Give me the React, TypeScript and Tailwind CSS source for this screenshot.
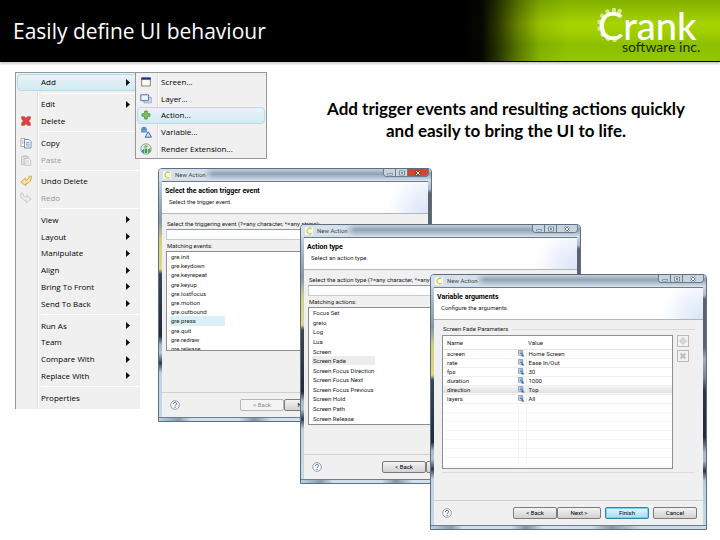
import React from 'react';
import { clsx } from 'clsx';

const BackArrow = ({ muted = false }: { muted?: boolean }) => (
  <svg viewBox="0 0 12 12" className={clsx('size-3', muted && '-scale-x-100')} aria-hidden="true">
    <path
      d="M.8 7 5.2 3.2 5.4 5.2C7.6 5.2 8.9 3.8 9.3 1.2L11.3 1.2C11.6 5.2 9.6 8.4 5.8 8.8L6 10.8Z"
      fill={muted ? '#ececec' : '#fbe3a0'}
      stroke={muted ? '#c4c4c4' : '#c9952f'}
      strokeWidth=".8"
      strokeLinejoin="round"
    />
  </svg>
);

const DeleteIcon = () => (
  <svg viewBox="0 0 12 12" className="size-3" aria-hidden="true">
    <path d="M1.5 1.8H4.6L6 3.4 7.4 1.8H10.5L10 4.4 8.6 6 10 7.6 10.5 10.2H7.4L6 8.6 4.6 10.2H1.5L2 7.6 3.4 6 2 4.4Z" fill="#e0403f" stroke="#c2383a" strokeWidth=".7" />
  </svg>
);

const CopyIcon = () => (
  <svg viewBox="0 0 12 12" className="size-3" aria-hidden="true">
    <path d="M1 1.5H5V9.5H1Z" fill="#fff" stroke="#a29a6c" strokeWidth=".8" />
    <path d="M4.5 2.5H9L11 4.5V11H4.5Z" fill="#f4f8ff" stroke="#7387b4" strokeWidth=".9" />
    <path d="M6 5.5H9.5M6 7.2H9.5M6 9H9.5M2 4H3.5M2 6H3.5" stroke="#6d86bd" strokeWidth=".8" />
  </svg>
);

const PasteIcon = () => (
  <svg viewBox="0 0 12 12" className="size-3" aria-hidden="true">
    <path d="M1.5 2.5H8.5V10.5H1.5Z" fill="#dedede" stroke="#bdbdbd" strokeWidth=".8" />
    <path d="M3.3 1.2H6.7V3.2H3.3Z" fill="#c8c8c8" />
    <path d="M5 4.5H9L10.7 6.2V11.3H5Z" fill="#f4f4f4" stroke="#bcbcbc" strokeWidth=".8" />
    <path d="M6.3 7H9M6.3 9H9" stroke="#c4c4c4" strokeWidth=".8" />
  </svg>
);

const ScreenIcon = () => (
  <svg viewBox="0 0 12 12" className="size-3" aria-hidden="true">
    <path d="M1.7 2H10.3V10H1.7Z" fill="#fdfcf4" stroke="#7e7558" strokeWidth=".9" />
    <path d="M1.3 1.5H10.7V3.7H1.3Z" fill="#1d2c96" />
  </svg>
);

const LayerIcon = () => (
  <svg viewBox="0 0 12 12" className="size-3" aria-hidden="true">
    <path d="M4 4.5H11.3V9.8H4Z" fill="#d9e4f7" stroke="#8d9cc0" strokeWidth=".8" />
    <path d="M.8 1.8H8.6V7.7H.8Z" fill="#eef4ff" stroke="#4e6cb5" strokeWidth="1" />
  </svg>
);

const PlusIcon = () => (
  <svg viewBox="0 0 12 12" className="size-3" aria-hidden="true">
    <path d="M4.7 2H7.3V4.7H10V7.3H7.3V10H4.7V7.3H2V4.7H4.7Z" fill="#83c25a" stroke="#4b9140" strokeWidth=".8" />
  </svg>
);

const VariableIcon = () => (
  <svg viewBox="0 0 12 12" className="size-3" aria-hidden="true">
    <circle cx="4" cy="3.6" r="2.8" fill="#5f8cc4" />
    <path d="M1 3.5H7V6.5H1Z" fill="#6d98cb" />
    <path d="M8.3 5.8 11.4 11.2H5.2Z" fill="#d7e5f8" stroke="#3565ad" strokeWidth="1" />
  </svg>
);

const RenderIcon = () => (
  <svg viewBox="0 0 12 12" className="size-3" aria-hidden="true">
    <circle cx="6" cy="6" r="5.2" fill="#e9f1ea" stroke="#71918c" strokeWidth=".8" />
    <path d="M1.5 8 4.3 5.3V10.2L2.2 9.6Z" fill="#3a8ccb" />
    <path d="M4.8 5.5H7V10H4.8Z" fill="#39a14a" />
    <path d="M7.6 6.5 10.4 5V9L7.6 10.4Z" fill="#5aa743" />
    <path d="M3 4 5.5 1.8 8.7 3.6 6 5.1Z" fill="#8cc278" />
  </svg>
);

const CrankMark = () => (
  <svg viewBox="0 0 12 12" className="size-2" aria-hidden="true">
    <path d="M0 0H12V12H0Z" fill="#f6f8ee" />
    <path d="M10 2.6A4.3 4.3 0 1 0 10 9.4" fill="none" stroke="#c3d045" strokeWidth="1.8" />
  </svg>
);

interface MenuEntry {
  label: string;
  icon?: React.ReactNode;
  disabled?: boolean;
  submenu?: boolean;
  active?: boolean;
}

const menuGroups: MenuEntry[][] = [
  [{ label: 'Add', submenu: true, active: true }],
  [
    { label: 'Edit', submenu: true },
    { label: 'Delete', icon: <DeleteIcon /> },
  ],
  [
    { label: 'Copy', icon: <CopyIcon /> },
    { label: 'Paste', icon: <PasteIcon />, disabled: true },
  ],
  [
    { label: 'Undo Delete', icon: <BackArrow /> },
    { label: 'Redo', icon: <BackArrow muted />, disabled: true },
  ],
  [
    { label: 'View', submenu: true },
    { label: 'Layout', submenu: true },
    { label: 'Manipulate', submenu: true },
    { label: 'Align', submenu: true },
    { label: 'Bring To Front', submenu: true },
    { label: 'Send To Back', submenu: true },
  ],
  [
    { label: 'Run As', submenu: true },
    { label: 'Team', submenu: true },
    { label: 'Compare With', submenu: true },
    { label: 'Replace With', submenu: true },
  ],
  [{ label: 'Properties' }],
];

const addEntries: MenuEntry[] = [
  { label: 'Screen...', icon: <ScreenIcon /> },
  { label: 'Layer...', icon: <LayerIcon /> },
  { label: 'Action...', icon: <PlusIcon />, active: true },
  { label: 'Variable...', icon: <VariableIcon /> },
  { label: 'Render Extension...', icon: <RenderIcon /> },
];

const MenuItem = ({ entry }: { entry: MenuEntry }) => (
  <button
    type="button"
    role="menuitem"
    disabled={entry.disabled}
    className={clsx(
      'flex min-h-4 w-full flex-1 items-center rounded-sm border pr-2 text-left text-[8px] leading-3',
      entry.active ? 'border-[#b5dcea] bg-linear-to-b from-[#e9f3f7] to-[#d3eaf4]' : 'border-transparent',
      entry.disabled ? 'text-[#9a9a9a]' : 'text-black'
    )}
  >
    <span className="flex w-[23px] shrink-0 items-center pl-[2px]">{entry.icon}</span>
    <span className="flex-1 whitespace-nowrap">{entry.label}</span>
    {entry.submenu && (
      <svg viewBox="0 0 4 7" className="h-[7px] w-1" aria-hidden="true">
        <path d="M0 0 4 3.5 0 7Z" fill="#111" />
      </svg>
    )}
  </button>
);

const ContextMenu = () => (
  <div role="menu" aria-label="Edit menu" className="flex h-[337px] w-[125px] flex-col border-t border-l border-[#979797] bg-[#f0f0f0] bg-[linear-gradient(to_right,transparent_21px,#dcdcdc_21px,#dcdcdc_22px,#fff_22px,#fff_23px,transparent_23px)] p-px pb-[3px]">
    {menuGroups.map((group, i) => (
      <React.Fragment key={i}>
        {i > 0 && <div role="separator" className="my-[2px] ml-6 h-px shrink-0 bg-white" />}
        {group.map((entry) => (
          <MenuItem key={entry.label} entry={entry} />
        ))}
      </React.Fragment>
    ))}
  </div>
);

const AddMenu = () => (
  <div role="menu" aria-label="Add" className="absolute top-[10px] left-[135px] flex h-[87px] w-[132px] flex-col border border-[#979797] bg-[#f0f0f0] bg-[linear-gradient(to_right,transparent_21px,#dcdcdc_21px,#dcdcdc_22px,#fff_22px,#fff_23px,transparent_23px)] p-px">
    {addEntries.map((entry) => (
      <MenuItem key={entry.label} entry={entry} />
    ))}
  </div>
);

interface DialogProps {
  heading: string;
  note: string;
  place: string;
  redClose?: boolean;
  footer: React.ReactNode;
  children: React.ReactNode;
}

const Edge = ({ right = false }: { right?: boolean }) => (
  <div
    className={clsx(
      'w-[3px] shrink-0',
      right
        ? 'bg-[linear-gradient(to_bottom,#c3d3e0_0,#aebdca_8px,#59646e_12px,#59646e_60px,#9fadb8_72px,#7a8792_90px,#2b3440_105px,#222b37_150px,#a9bac8_166px,#a9bac8_174px,#2b3440_184px,#b9cbd8_194px,#c6dae8_240px)]'
        : 'bg-[linear-gradient(to_bottom,#c3d3e0_0,#9dafbf_20px,#8796a4_40px,#b3b9a0_52px,#d2cf7c_58px,#dcd98c_88px,#3a4654_93px,#222c38_155px,#a9bac8_164px,#b5c6d3_172px,#2f3b49_182px,#c2d3e0_192px,#c6dae8_240px)]'
    )}
  />
);

const Dialog = ({ heading, note, place, redClose, footer, children }: DialogProps) => (
  <section aria-label={heading} className={clsx("absolute flex flex-col overflow-hidden rounded-t border border-[#5d6f80] font-['Roboto',sans-serif]", place)}>
    <div className="flex h-3 shrink-0 items-center gap-1 bg-[linear-gradient(to_right,#d5e0ea_0,#d5e0ea_44px,transparent_54px),linear-gradient(to_bottom,#c2d1de_0,#8fa3b6_40%,#b9c8d6_75%,#dbe5ee_100%)] pr-[2px] pl-1 text-[6px] leading-[10px] text-[#444]">
      <CrankMark />
      <span className="flex-1">New Action</span>
      <div className="flex h-2 self-start overflow-hidden rounded-b-sm border border-t-0 border-[#6a7c8d] text-[#566573]">
        <button type="button" aria-label="Minimize" className="flex w-3 items-center justify-center border-r border-[#6a7c8d] bg-[#c7d4e0]">
          <svg viewBox="0 0 8 6" className="h-[6px] w-2"><path d="M1.5 3.5H6.5V5H1.5Z" fill="#fff" stroke="currentColor" strokeWidth=".6" /></svg>
        </button>
        <button type="button" aria-label="Maximize" className="flex w-3 items-center justify-center border-r border-[#6a7c8d] bg-[#c7d4e0]">
          <svg viewBox="0 0 8 6" className="h-[6px] w-2"><path d="M1.5 1H6.5V5H1.5ZM3 2.5H5V3.5H3Z" fill="#fff" stroke="currentColor" strokeWidth=".7" /></svg>
        </button>
        <button type="button" aria-label="Close" className={clsx('flex w-5 items-center justify-center', redClose ? 'bg-[#c84a35] text-[#7c2415]' : 'bg-[#c7d4e0]')}>
          <svg viewBox="0 0 8 6" className="h-[6px] w-2"><path d="M2 1 6 5M6 1 2 5" stroke="currentColor" strokeWidth="2" /><path d="M2 1 6 5M6 1 2 5" stroke="#fff" strokeWidth="1" /></svg>
        </button>
      </div>
    </div>
    <div className="flex min-h-0 flex-1">
      <Edge />
      <div className="flex min-w-0 flex-1 flex-col border-t border-[#6b7c8c] bg-[#f0f0f0]">
        <header className="h-8 shrink-0 border-b border-[#b4b4b4] bg-white bg-[radial-gradient(circle_at_100%_100%,#d9e4f6_0,#e9f0fb_20px,#fff_42px)] pt-1 pl-[3px]">
          <h2 className="text-[7px] leading-[10px] font-bold text-black">{heading}</h2>
          <p className="pt-px pl-1 text-[6px] leading-[10px] text-[#222]">{note}</p>
        </header>
        <div className="flex-1 px-1">{children}</div>
        <footer className="flex h-[25px] shrink-0 items-center border-t border-[#cfcfcf] pl-2">
          <button type="button" aria-label="Help">
            <svg viewBox="0 0 12 12" className="size-[10px]">
              <circle cx="6" cy="6" r="5.2" fill="#f7f8fb" stroke="#7686a3" strokeWidth=".9" />
              <path d="M4.1 4.6C4.2 2.2 8 2.3 7.9 4.5 7.9 5.9 6.1 5.8 6.1 7.4M6.1 8.4V9.6" fill="none" stroke="#4f6285" strokeWidth="1.2" />
            </svg>
          </button>
          {footer}
        </footer>
      </div>
      <Edge right />
    </div>
    <div className="h-1 shrink-0 border-t border-[#6c7f91] bg-[linear-gradient(to_right,#b9d3e4_0,#8a9cad_20px,#cfdfeb_32px,#cfdfeb_80px,#8293a5_95px,#d3e1ec_112px,#cfdfeb_160px,#8798aa_180px,#cbdbe7_210px)]" />
  </section>
);

interface PushButtonProps {
  children: React.ReactNode;
  disabled?: boolean;
  primary?: boolean;
}

const PushButton = ({ children, disabled, primary }: PushButtonProps) => (
  <button
    type="button"
    disabled={disabled}
    className={clsx(
      'h-3 w-11 shrink-0 rounded-xs border text-center text-[6px] leading-[10px]',
      primary && 'border-[#2f86a8] bg-linear-to-b from-[#e6f6fd] to-[#a5dbf3] text-black ring-1 ring-[#74d3f2] ring-inset',
      disabled && 'border-[#b5b5b5] bg-[#f4f4f4] text-[#8b8b8b]',
      !primary && !disabled && 'border-[#7c7c7c] bg-linear-to-b from-[#f3f3f3] to-[#d2d2d2] text-black'
    )}
  >
    {children}
  </button>
);

interface PickerProps {
  id: string;
  prompt: string;
  listLabel: string;
  options: string[];
  selected: string;
  selectedStyle: string;
  boxHeight: string;
  listHeight: string;
}

const Picker = ({ id, prompt, listLabel, options, selected, selectedStyle, boxHeight, listHeight }: PickerProps) => (
  <div className="flex flex-col pt-1 text-[6px] text-[#222]">
    <label htmlFor={id} className="pt-px pl-px leading-[10px] whitespace-nowrap">{prompt}</label>
    <input id={id} type="text" className="h-[11px] w-full border border-[#c5cbd3] border-t-[#8f99a5] bg-white px-1" />
    <span className="pt-px pl-px leading-[10px]">{listLabel}</span>
    <div className={clsx('overflow-hidden border border-[#8a8f96] bg-white', boxHeight)}>
      <ul aria-label={listLabel} className={clsx('flex flex-col pl-[3px]', listHeight)}>
        {options.map((option, i) => (
          <li key={i} className={clsx('flex w-fit flex-1 items-center border border-transparent leading-[7px]', option === selected && selectedStyle)}>
            {option}
          </li>
        ))}
      </ul>
    </div>
  </div>
);

const triggerEvents = [
  'gre.init',
  'gre.keydown',
  'gre.keyrepeat',
  'gre.keyup',
  'gre.lostfocus',
  'gre.motion',
  'gre.outbound',
  'gre.press',
  'gre.quit',
  'gre.redraw',
  'gre.release',
];

const actionTypes = [
  'Focus Set',
  'greio',
  'Log',
  'Lua',
  'Screen',
  'Screen Fade',
  'Screen Focus Direction',
  'Screen Focus Next',
  'Screen Focus Previous',
  'Screen Hold',
  'Screen Path',
  'Screen Release',
];

const fadeParameters = [
  ['screen', 'Home Screen'],
  ['rate', 'Ease In/Out'],
  ['fps', '30'],
  ['duration', '1000'],
  ['direction', 'Top'],
  ['layers', 'All'],
];

const ValueIcon = () => (
  <svg viewBox="0 0 8 8" className="size-[7px]" aria-hidden="true">
    <path d="M.5.5H5.5V6H.5Z" fill="#cfe0f3" stroke="#6889b5" strokeWidth=".8" />
    <path d="M2 2.4H5M2 4H5" stroke="#44699f" strokeWidth=".8" />
    <path d="M4 3.5 7.5 7.5H4Z" fill="#47658f" />
  </svg>
);

const ParameterTable = () => (
  <fieldset className="mx-1 mt-1 border-b border-[#dcdcdc] pb-[3px] text-[6px] text-[#222]">
    <legend className="flex w-full items-center gap-1 pl-px leading-[10px] whitespace-nowrap">
      Screen Fade Parameters
      <span className="h-px flex-1 bg-[#d9d9d9]" />
    </legend>
    <div className="flex items-start gap-1 pt-px">
      <div className="h-[134px] flex-1 overflow-hidden border border-[#8a8f96] bg-white">
        <table className="w-full table-fixed border-collapse text-left">
          <thead>
            <tr className="h-[13px] border-b border-[#e4e4e4]">
              <th className="w-[75px] pl-1 font-normal">Name</th>
              <th className="w-2" />
              <th className="pl-[2px] font-normal">Value</th>
            </tr>
          </thead>
          <tbody>
            {fadeParameters.map(([name, value]) => (
              <tr key={name} className={clsx('h-[9px] border-b border-[#f0f0f0] leading-[8px]', name === 'direction' && 'bg-linear-to-b from-[#f8f8f8] to-[#e0e0e0]')}>
                <td className="pl-1">{name}</td>
                <td className="border-r border-[#ececec]"><ValueIcon /></td>
                <td className="pl-[2px]">{value}</td>
              </tr>
            ))}
            {Array.from({ length: 7 }, (_, i) => (
              <tr key={i} className="h-[9px] border-b border-[#f4f4f4]">
                <td />
                <td className="border-x border-[#f4f4f4]" />
                <td />
              </tr>
            ))}
          </tbody>
        </table>
      </div>
      <div className="flex w-[18px] flex-col gap-[3px]">
        <button type="button" aria-label="Add parameter" className="flex size-3 items-center justify-center border border-[#b9b9b9] bg-[#f2f2f2]">
          <svg viewBox="0 0 8 8" className="size-2"><path d="M3 1H5V3H7V5H5V7H3V5H1V3H3Z" fill="#e0e0e0" stroke="#b0b0b0" strokeWidth=".5" /></svg>
        </button>
        <button type="button" aria-label="Remove parameter" className="flex size-3 items-center justify-center border border-[#b9b9b9] bg-[#f2f2f2]">
          <svg viewBox="0 0 8 8" className="size-2"><path d="M1.5 1.5 6.5 6.5M6.5 1.5 1.5 6.5" stroke="#bcbcbc" strokeWidth="2" /></svg>
        </button>
      </div>
    </div>
  </fieldset>
);

const GearTeeth = () => (
  <svg viewBox="0 0 40 40" className="absolute -top-1 -left-1 size-10" aria-hidden="true">
    {[178, 204, 230, 256, 282, 308, 334, 360, 382].map((angle) => (
      <rect key={angle} x="18" y="3" width="4" height="5" rx="1" fill="#d3e790" transform={`rotate(${angle} 20 20)`} />
    ))}
  </svg>
);

const App: React.FC = () => (
  <div className="min-h-screen bg-white font-['Open_Sans',sans-serif]">
    <header className="flex h-[62px] items-center justify-between border-b border-black bg-[linear-gradient(to_right,#000_64%,#000000f4_67%,#000000c0_69%,#00000060_72%,#00000018_75%,transparent_79%),linear-gradient(to_bottom,#82b000_0,#a6d300_38%,#a2d000_50%,#8cbf00_75%,#93c800_100%)] pr-[22px] pl-[13px] shadow-[0_2px_2px_#cfcccf]">
      <h1 className="text-[21px] leading-6 text-white">Easily define UI behaviour</h1>
      <div className="relative flex w-[100px] flex-col font-['Lato',sans-serif]">
        <GearTeeth />
        <span className="relative text-[38px] leading-8 font-medium text-white">Crank</span>
        <span className="pl-6 text-[14px] leading-3 whitespace-nowrap text-[#1c2a00]">software inc.</span>
      </div>
    </header>
    <main className="relative flex min-h-[478px] items-start justify-between pt-[10px] pr-7 pl-[15px]">
      <ContextMenu />
      <AddMenu />
      <p className="w-[372px] pt-[26px] text-center font-['Lato',sans-serif] text-[17px] leading-[22px] font-bold text-black">
        Add trigger events and resulting actions quickly and easily to bring the UI to life.
      </p>

      <Dialog
        heading="Select the action trigger event"
        note="Select the trigger event."
        place="top-[106px] left-[158px] h-[254px] w-[274px]"
        redClose
        footer={
          <div className="flex pl-[60px]">
            <PushButton disabled>&lt; Back</PushButton>
            <PushButton>Next &gt;</PushButton>
          </div>
        }
      >
        <Picker
          id="trigger"
          prompt="Select the triggering event (?=any character, *=any string):"
          listLabel="Matching events:"
          options={triggerEvents}
          selected="gre.press"
          selectedStyle="border-[#b9dfee] bg-[#d9f0f9] pr-7"
          boxHeight="h-[100px]"
          listHeight="h-[101px]"
        />
      </Dialog>

      <Dialog
        heading="Action type"
        note="Select an action type."
        place="top-[162px] left-[300px] h-[260px] w-[281px]"
        footer={
          <div className="flex pl-[60px]">
            <PushButton>&lt; Back</PushButton>
            <PushButton>Next &gt;</PushButton>
          </div>
        }
      >
        <Picker
          id="action"
          prompt="Select the action type (?=any character, *=any string):"
          listLabel="Matching actions:"
          options={actionTypes}
          selected="Screen Fade"
          selectedStyle="border-[#e2e2e2] bg-[#ececec] pr-7"
          boxHeight="h-[118px]"
          listHeight="h-[115px]"
        />
      </Dialog>

      <Dialog
        heading="Variable arguments"
        note="Configure the arguments."
        place="top-[212px] left-[430px] h-[256px] w-[277px]"
        footer={
          <div className="flex flex-1 justify-end gap-1 pr-[6px]">
            <div className="flex">
              <PushButton>&lt; Back</PushButton>
              <PushButton>Next &gt;</PushButton>
            </div>
            <PushButton primary>Finish</PushButton>
            <PushButton>Cancel</PushButton>
          </div>
        }
      >
        <ParameterTable />
      </Dialog>
    </main>
  </div>
);

export default App;
